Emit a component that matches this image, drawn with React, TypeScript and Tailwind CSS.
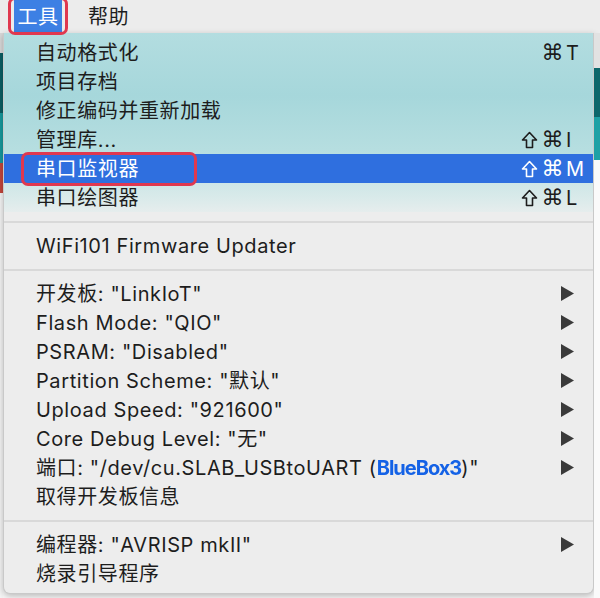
import type { ReactNode } from 'react'

const FONT = { fontFamily: 'Inter, "Noto Sans CJK SC", sans-serif' }

type Item = { label: ReactNode; shortcut?: string; shift?: boolean; arrow?: boolean; active?: boolean }

const toolItems: Item[] = [
  { label: '自动格式化', shortcut: 'T' },
  { label: '项目存档' },
  { label: '修正编码并重新加载' },
  { label: '管理库...', shortcut: 'I', shift: true },
  { label: '串口监视器', shortcut: 'M', shift: true, active: true },
  { label: '串口绘图器', shortcut: 'L', shift: true },
]

const boardItems: Item[] = [
  { label: '开发板: "LinkIoT"', arrow: true },
  { label: 'Flash Mode: "QIO"', arrow: true },
  { label: 'PSRAM: "Disabled"', arrow: true },
  { label: 'Partition Scheme: "默认"', arrow: true },
  { label: 'Upload Speed: "921600"', arrow: true },
  { label: 'Core Debug Level: "无"', arrow: true },
  {
    label: (
      <>
        端口: "/dev/cu.SLAB_USBtoUART (
        <span className="font-bold tracking-[-1px] text-[#1462e6] blur-[0.5px]">BlueBox3</span>
        )"
      </>
    ),
    arrow: true,
  },
  { label: '取得开发板信息' },
]

const programmerItems: Item[] = [
  { label: '编程器: "AVRISP mkII"', arrow: true },
  { label: '烧录引导程序' },
]

function Arrow() {
  return (
    <svg width="13" height="15" viewBox="0 0 13 15" className="mr-[7px]">
      <path d="M0 0 L13 7.5 L0 15 Z" fill="#3a3a3a" />
    </svg>
  )
}

function ShiftIcon() {
  return (
    <svg width="17" height="18" viewBox="0 0 17 18" className="mr-[3px]">
      <path
        d="M8.5 1.5 L15.5 9 H11.5 V16.5 H5.5 V9 H1.5 Z"
        fill="none"
        stroke="currentColor"
        strokeWidth="1.6"
        strokeLinejoin="round"
      />
    </svg>
  )
}

function Row({ item }: { item: Item }) {
  return (
    <div
      className={`flex h-[29px] items-center justify-between pl-[32px] pr-[12px] text-[20px] tracking-[0.6px] ${
        item.active ? 'bg-[#2f6fdf] text-white' : 'text-[#1d1d1d]'
      }`}
    >
      <span className="whitespace-nowrap">{item.label}</span>
      {item.shortcut && (
        <span className="flex items-center">
          {item.shift && <ShiftIcon />}
          <span className="text-[22px] leading-none" style={{ fontFamily: '"DejaVu Sans", sans-serif' }}>
            ⌘
          </span>
          <span className="ml-[2px] w-[15px]">{item.shortcut}</span>
        </span>
      )}
      {item.arrow && <Arrow />}
    </div>
  )
}

function Separator() {
  return (
    <div className="flex h-[19px] items-center">
      <div className="h-[2px] w-full bg-[#d9d9d9]" />
    </div>
  )
}

export default function App() {
  return (
    <div className="relative h-[598px] w-[600px] overflow-hidden bg-[#f7f7f7]" style={FONT}>
      {/* menu bar */}
      <div className="flex h-[33px] items-stretch bg-[#ececec] text-[20px] tracking-[0.6px] text-[#1d1d1d]">
        <div className="ml-[14px] flex w-[48px] items-center justify-center bg-[#3d80e4] text-white">工具</div>
        <div className="ml-[26px] flex items-center">帮助</div>
      </div>

      <div className="flex h-[565px]">
        {/* app behind, left edge */}
        <div className="flex w-[3px] flex-col">
          <div className="h-[20px] bg-[#d8d8d8]" />
          <div className="h-[60px] bg-[#0b5e63]" />
          <div className="h-[50px] bg-[#17989c]" />
          <div className="h-[30px] bg-[#c2453a]" />
          <div className="flex-1 bg-[#f4f4f4]" />
        </div>

        {/* dropdown */}
        <div className="flex h-[561px] w-[591px] flex-col overflow-hidden rounded-b-[7px] border border-t-0 border-[#c9c9c9] bg-[#ededed] shadow-[0_2px_6px_rgba(0,0,0,0.25)]">
          <div className="bg-[linear-gradient(180deg,#b3dde0_0%,#a6d7db_35%,#b6dee0_65%,#d9eaea_92%,#e6eded_100%)] pt-[5px]">
            {toolItems.map((it, i) => (
              <Row key={i} item={it} />
            ))}
          </div>
          <Separator />
          <Row item={{ label: 'WiFi101 Firmware Updater' }} />
          <Separator />
          {boardItems.map((it, i) => (
            <Row key={i} item={it} />
          ))}
          <Separator />
          {programmerItems.map((it, i) => (
            <Row key={i} item={it} />
          ))}
        </div>

        {/* app behind, right edge */}
        <div className="flex w-[6px] flex-col">
          <div className="h-[35px] bg-[#e2e2e2]" />
          <div className="h-[49px] bg-[#0c676b]" />
          <div className="h-[43px] bg-[#1ea1a5]" />
          <div className="flex-1 bg-[#fafafa]" />
        </div>
      </div>

      {/* red annotation outlines */}
      <div className="absolute left-[8px] top-[-3px] h-[38px] w-[60px] rounded-[7px] border-[3px] border-[#e0384f]" />
      <div className="absolute left-[21px] top-[152px] h-[34px] w-[176px] rounded-[7px] border-[3px] border-[#e0384f]" />
    </div>
  )
}
